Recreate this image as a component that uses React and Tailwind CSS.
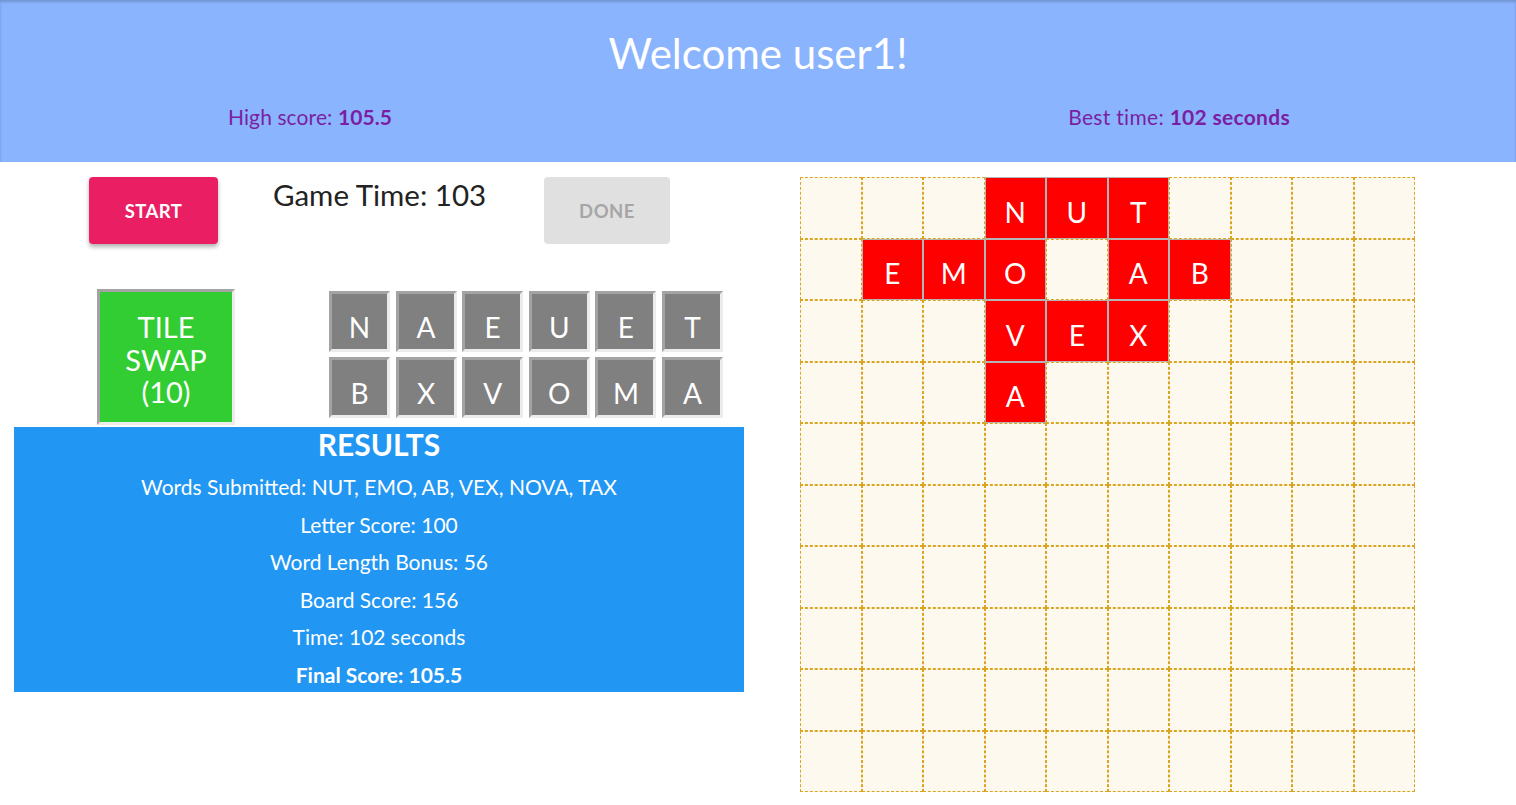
import React from "react";

const rack = [
  ["N", "A", "E", "U", "E", "T"],
  ["B", "X", "V", "O", "M", "A"],
];

const placed = {
  "0-3": "N",
  "0-4": "U",
  "0-5": "T",
  "1-1": "E",
  "1-2": "M",
  "1-3": "O",
  "1-5": "A",
  "1-6": "B",
  "2-3": "V",
  "2-4": "E",
  "2-5": "X",
  "3-3": "A",
};

function Tile({ letter }) {
  return (
    <div className="w-[61px] h-[61px] bg-[#808080] border-[3px] border-t-[#a3a3a3] border-l-[#a3a3a3] border-b-[#ececec] border-r-[#ececec] flex items-center justify-center pt-[10px] text-white text-[28px] leading-none">
      {letter}
    </div>
  );
}

export default function App() {
  const cells = [];
  for (let r = 0; r < 10; r++) {
    for (let c = 0; c < 10; c++) {
      const l = placed[`${r}-${c}`];
      cells.push(
        l ? (
          <div
            key={`${r}-${c}`}
            className="h-[61.5px] bg-[#ff0000] border border-solid border-[#b5b5b5] flex items-center justify-center pt-[8px] text-white text-[28px] leading-none"
          >
            {l}
          </div>
        ) : (
          <div
            key={`${r}-${c}`}
            className="h-[61.5px] bg-[#fdf9ef] border border-dashed border-[#daa520]"
          />
        )
      );
    }
  }

  return (
    <div className="w-[1516px] min-h-[805px] bg-white font-['Segoe_UI','Lato',sans-serif] text-[#222]">
      <header className="h-[162px] bg-[#8ab4fe] shadow-[inset_0_2px_3px_rgba(0,0,0,0.18)] flex flex-col">
        <h1 className="pt-[28px] text-center text-white text-[42px] leading-[50px] font-normal">
          Welcome user1!
        </h1>
        <div className="flex mt-[25px] text-[21px] leading-[28px] text-[#7b1fa2]">
          <div className="ml-[228px] tracking-[0.1px]">
            High score: <span className="font-bold">105.5</span>
          </div>
          <div className="ml-auto mr-[226px] tracking-[0.3px]">
            Best time: <span className="font-bold">102 seconds</span>
          </div>
        </div>
      </header>

      <main className="flex">
        <section className="w-[800px] flex flex-col">
          <div className="flex items-start mt-[15px]">
            <button className="ml-[89px] w-[129px] h-[67px] pt-[2px] rounded bg-[#e91e63] text-white font-bold text-[18.5px] tracking-wide shadow-[0_3px_4px_rgba(0,0,0,0.3)]">
              START
            </button>
            <div className="ml-[55px] w-[271px] -mt-[1px] text-[29.5px] leading-[38px] text-[#222]">
              Game Time: 103
            </div>
            <button className="w-[126px] h-[67px] pt-[2px] rounded bg-[#e0e0e0] text-[#a6a6a6] font-bold text-[18.5px] tracking-wide">
              DONE
            </button>
          </div>

          <div className="flex items-start mt-[45px]">
            <div className="ml-[97px] w-[138px] h-[136px] bg-[#32cd32] border-[3px] border-t-[#a3a3a3] border-l-[#a3a3a3] border-r-[#ececec] border-b-[#ececec] flex flex-col items-center justify-center pt-[6px] text-white text-[29px] leading-[32.5px] text-center">
              <span>TILE</span>
              <span>SWAP</span>
              <span>(10)</span>
            </div>
            <div className="ml-[94px] mt-[2px] flex flex-col gap-[5px]">
              {rack.map((row, i) => (
                <div key={i} className="flex gap-[5.6px]">
                  {row.map((l, j) => (
                    <Tile key={j} letter={l} />
                  ))}
                </div>
              ))}
            </div>
          </div>

          <div className="ml-[14px] mt-[2px] w-[730px] h-[265px] bg-[#2196f3] text-white text-center flex flex-col items-center">
            <div className="font-bold text-[30px] leading-[36px] -mt-[1px]">RESULTS</div>
            <div className="text-[21px] leading-[37.5px] mt-[6px]">
              <div>Words Submitted: NUT, EMO, AB, VEX, NOVA, TAX</div>
              <div>Letter Score: 100</div>
              <div>Word Length Bonus: 56</div>
              <div>Board Score: 156</div>
              <div>Time: 102 seconds</div>
              <div className="font-bold">Final Score: 105.5</div>
            </div>
          </div>
        </section>

        <section className="mt-[15px]">
          <div className="grid grid-cols-[repeat(10,61.5px)]">{cells}</div>
        </section>
      </main>
    </div>
  );
}
